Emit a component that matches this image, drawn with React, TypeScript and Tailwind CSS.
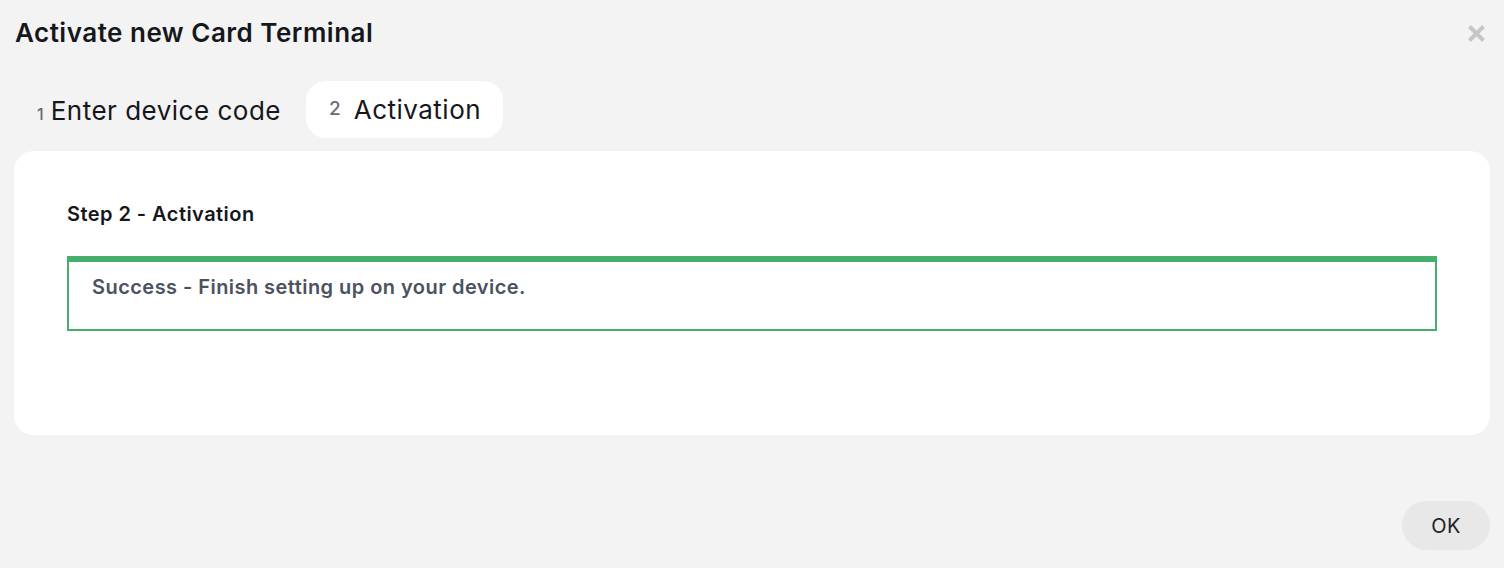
import { useState } from "react";

const steps = [
  { n: 1, label: "Enter device code" },
  { n: 2, label: "Activation" },
];

export default function App() {
  const [active] = useState(2);

  return (
    <div
      className="flex h-[568px] w-full flex-col bg-[#f3f3f3] text-[#16171d]"
      style={{ fontFamily: "Inter, 'Noto Sans', sans-serif" }}
    >
      {/* Header */}
      <div className="flex items-start justify-between pl-[15px] pr-[18px] pt-[17px]">
        <h1 className="text-[26px] font-semibold leading-8 tracking-[0.5px]">
          Activate new Card Terminal
        </h1>
        <button className="mt-[7px] text-[#c6c6c6]">
          <svg width="19" height="19" viewBox="0 0 19 19">
            <path
              d="M2.5 2.5 L16.5 16.5 M16.5 2.5 L2.5 16.5"
              stroke="currentColor"
              strokeWidth="4"
            />
          </svg>
        </button>
      </div>

      {/* Steps */}
      <div className="mt-8 flex items-center gap-[3px] px-[14px]">
        {steps.map((s) =>
          s.n === active ? (
            <div
              key={s.n}
              className="flex h-[57px] items-center gap-[13px] rounded-[20px] bg-white pl-[23px] pr-[22px]"
            >
              <span className="text-[19px] font-medium text-[#6b6b6f]">
                {s.n}
              </span>
              <span className="text-[26px] leading-8 tracking-[0.5px]">
                {s.label}
              </span>
            </div>
          ) : (
            <div
              key={s.n}
              className="flex h-[57px] items-baseline pl-[23px] pr-[22px] pt-[14px]"
            >
              <span className="mr-[7px] text-[16px] font-medium text-[#6b6b6f]">
                {s.n}
              </span>
              <span className="text-[26px] leading-8 tracking-[0.5px]">
                {s.label}
              </span>
            </div>
          )
        )}
      </div>

      {/* Card */}
      <div className="mx-[14px] mt-[13px] h-[284px] rounded-[20px] bg-white px-[53px] pt-[49px]">
        <h2 className="text-[20px] font-semibold leading-7 tracking-[0.45px]">
          Step 2 - Activation
        </h2>
        <div className="mt-[28px] border-2 border-t-[6px] border-[#45ae6a] pb-[28px] pl-[23px] pt-[11px]">
          <p className="text-[20px] font-semibold leading-7 tracking-[0.45px] text-[#4b5260]">
            Success - Finish setting up on your device.
          </p>
        </div>
      </div>

      {/* Footer */}
      <div className="mt-auto flex justify-end px-[14px] pb-[18px]">
        <button className="h-[49px] w-[88px] rounded-full bg-[#e8e8e8] text-[20px] tracking-[0.5px] text-[#222]">
          OK
        </button>
      </div>
    </div>
  );
}
